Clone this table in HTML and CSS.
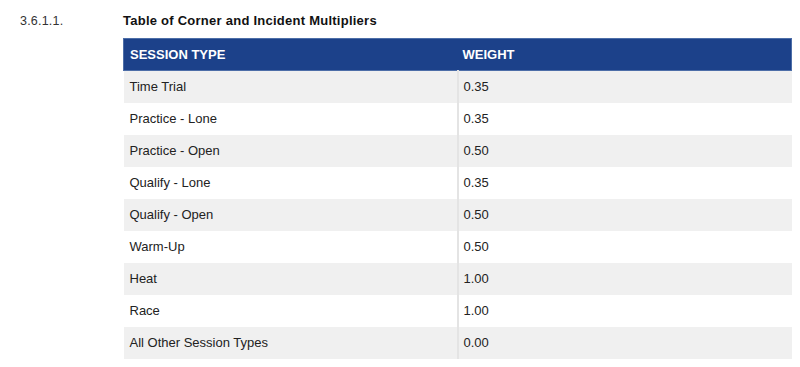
FILE: index.html
```html
<!DOCTYPE html>
<html>
<head>
<meta charset="utf-8">
<link rel="stylesheet" href="styles.css">
</head>
<body>
<div class="section">
  <div class="num">3.6.1.1.</div>
  <div class="content">
    <div class="title">Table of Corner and Incident Multipliers</div>
    <table class="tbl">
      <thead>
        <tr><th class="c1">SESSION TYPE</th><th class="c2">WEIGHT</th></tr>
      </thead>
      <tbody>
        <tr><td class="c1">Time Trial</td><td class="c2">0.35</td></tr>
        <tr><td class="c1">Practice - Lone</td><td class="c2">0.35</td></tr>
        <tr><td class="c1">Practice - Open</td><td class="c2">0.50</td></tr>
        <tr><td class="c1">Qualify - Lone</td><td class="c2">0.35</td></tr>
        <tr><td class="c1">Qualify - Open</td><td class="c2">0.50</td></tr>
        <tr><td class="c1">Warm-Up</td><td class="c2">0.50</td></tr>
        <tr><td class="c1">Heat</td><td class="c2">1.00</td></tr>
        <tr><td class="c1">Race</td><td class="c2">1.00</td></tr>
        <tr><td class="c1">All Other Session Types</td><td class="c2">0.00</td></tr>
      </tbody>
    </table>
  </div>
</div>
</body>
</html>
```
FILE: styles.css
```css
html, body {
  margin: 0;
  padding: 0;
  background: #ffffff;
}
body {
  font-family: "Liberation Sans", Arial, sans-serif;
  color: #222222;
}
.section {
  display: flex;
  padding: 13px 0 0 20px;
}
.num {
  width: 103px;
  font-size: 12.5px;
  line-height: 16px;
  color: #333333;
  letter-spacing: 0.2px;
}
.content {
  width: 669px;
}
.title {
  font-size: 13px;
  line-height: 16px;
  font-weight: bold;
  letter-spacing: 0.25px;
  color: #111111;
  height: 25px;
}
.tbl {
  width: 669px;
  border-collapse: collapse;
  font-size: 13px;
}
.tbl th {
  background: #1c418a;
  color: #ffffff;
  text-align: left;
  font-weight: bold;
  height: 32px;
  padding: 0 0 0 6px;
  box-sizing: border-box;
  font-size: 13px;
  border-top: 1px solid #4d6ea8;
  border-bottom: 1px solid #4d6ea8;
}
.tbl th.c1 { border-left: 1px solid #4d6ea8; }
.tbl th.c2 { border-right: 1px solid #4d6ea8; padding-left: 5px; }
.tbl td {
  height: 32px;
  padding: 0 0 0 6px;
  box-sizing: border-box;
}
.tbl .c1 { width: 334px; }
.tbl td.c2 { border-left: 2px solid #e4e4e4; padding-left: 5px; }
.tbl tbody tr:nth-child(odd) td { background: #f0f0f0; }
```
